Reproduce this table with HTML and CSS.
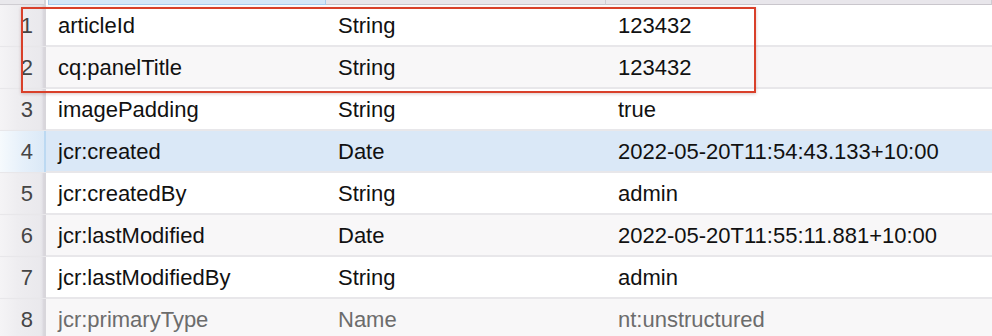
FILE: index.html
```html
<!DOCTYPE html>
<html>
<head>
<meta charset="utf-8">
<link rel="stylesheet" href="styles.css">
</head>
<body>
<div class="sheet">
  <div class="head">
    <div class="h-gutter"></div>
    <div class="h-cell h-sel"></div>
    <div class="h-cell"></div>
    <div class="h-cell"></div>
  </div>
  <div class="row odd"><div class="num">1</div><div class="cell">articleId</div><div class="cell">String</div><div class="cell">123432</div></div>
  <div class="row even"><div class="num">2</div><div class="cell">cq:panelTitle</div><div class="cell">String</div><div class="cell">123432</div></div>
  <div class="row odd"><div class="num">3</div><div class="cell">imagePadding</div><div class="cell">String</div><div class="cell">true</div></div>
  <div class="row selected"><div class="num">4</div><div class="cell">jcr:created</div><div class="cell">Date</div><div class="cell">2022-05-20T11:54:43.133+10:00</div></div>
  <div class="row odd"><div class="num">5</div><div class="cell">jcr:createdBy</div><div class="cell">String</div><div class="cell">admin</div></div>
  <div class="row even"><div class="num">6</div><div class="cell">jcr:lastModified</div><div class="cell">Date</div><div class="cell">2022-05-20T11:55:11.881+10:00</div></div>
  <div class="row odd"><div class="num">7</div><div class="cell">jcr:lastModifiedBy</div><div class="cell">String</div><div class="cell">admin</div></div>
  <div class="row even protected"><div class="num">8</div><div class="cell">jcr:primaryType</div><div class="cell">Name</div><div class="cell">nt:unstructured</div></div>
  <div class="callout"></div>
</div>
</body>
</html>
```
FILE: styles.css
```css
html, body {
  margin: 0;
  padding: 0;
  background: #ffffff;
}
.sheet {
  position: relative;
  width: 992px;
  height: 336px;
  overflow: hidden;
  font-family: "Liberation Sans", Arial, Helvetica, sans-serif;
  font-size: 22px;
  color: #111111;
}
.head {
  display: grid;
  grid-template-columns: 46px 280px 280px 1fr;
  height: 5px;
}
.h-gutter {
  background: #e9e8ec;
  border-bottom: 1px solid #cfcdd2;
  border-right: 2px solid #d6d4d9;
}
.h-cell {
  background: #e8e6eb;
  border-bottom: 1px solid #c9c6cc;
  border-right: 1px solid #cfccd3;
}
.h-sel {
  background: #d4e7f8;
  border: 1px solid #a9cdee;
  border-top: none;
  margin-left: 2px;
}
.row {
  display: grid;
  grid-template-columns: 46px 280px 280px 1fr;
  height: 40px;
  line-height: 41px;
  border-bottom: 2px solid #e8e7ea;
}
.odd { background: #ffffff; }
.even { background: #f8f7f8; }
.selected { background: #dae8f7; }
.num {
  text-align: right;
  padding-right: 11px;
  color: #454545;
  background: linear-gradient(to right, #f5f4f6 0%, #eeedf0 40%, #e9e8ec 100%);
  border-right: 2px solid #d8d6db;
  box-shadow: inset -3px 0 3px -2px #d2d0d6;
}
.selected .num {
  background: linear-gradient(to right, #f6fafd 0%, #e6f0fa 50%, #dbe9f7 100%);
  border-right-color: #bcd9f2;
  box-shadow: none;
}
.cell {
  padding-left: 12px;
  white-space: nowrap;
  overflow: hidden;
}
.protected .cell { color: #6c6c6c; }
.callout {
  position: absolute;
  left: 21px;
  top: 7px;
  width: 731px;
  height: 82px;
  border: 2px solid #d9402a;
  box-shadow: 0 1px 3px rgba(120, 40, 30, 0.25);
}
```
